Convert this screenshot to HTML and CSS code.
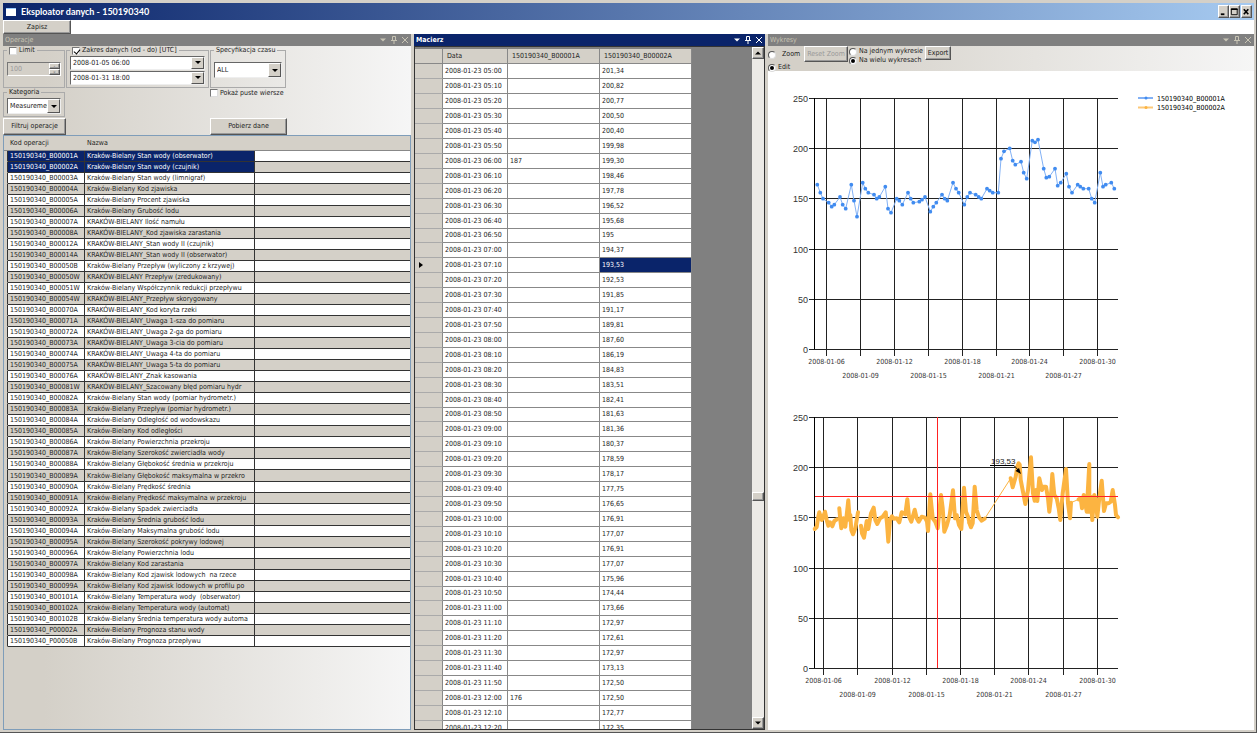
FILE: index.html
```html
<!DOCTYPE html>
<html lang="pl">
<head>
<meta charset="utf-8">
<title>Eksploator danych - 150190340</title>
<link rel="stylesheet" href="styles.css">
</head>
<body>
<div class="window">
  <header class="titlebar">
    <span class="app-icon"></span>
    <h1 class="title">Eksploator danych - 150190340</h1>
    <div class="win-buttons">
      <button class="btn win-btn" aria-label="Minimalizuj"><svg viewBox="0 0 10 10"><path d="M2 7.5h4" stroke="#000" stroke-width="2"/></svg></button>
      <button class="btn win-btn" aria-label="Maksymalizuj"><svg viewBox="0 0 10 10"><path d="M1.5 1.5h6.500v6.500h-6.500z" fill="none" stroke="#000"/><path d="M1 2h7.500" stroke="#000" stroke-width="1.500"/></svg></button>
      <button class="btn win-btn win-close" aria-label="Zamknij"><svg viewBox="0 0 10 10"><path d="M2 2l5 5.500M7 2l-5 5.500" stroke="#000" stroke-width="1.800"/></svg></button>
    </div>
  </header>
  <nav class="toolbar"><button class="btn save">Zapisz</button></nav>

  <main class="panes">
    <section class="pane operations">
      <div class="pane-head"><h2>Operacje</h2>
        <svg class="pane-icons" viewBox="0 0 34 12"><path d="M3 4.500h6l-3 3z" fill="currentColor"/><path d="M15.500 2.500h3v4h-3zM14 6.500h6M17 6.500v3.500" fill="none" stroke="currentColor"/><path d="M25 3l6 6M31 3l-6 6" stroke="currentColor"/></svg>
      </div>
      <form class="filters">
        <fieldset class="group">
          <legend><label><input type="checkbox" class="check">Limit</label></legend>
          <div class="spinner"><input type="text" class="num" value="100" disabled aria-label="Limit wierszy"><span class="steps"><button type="button" class="btn" disabled aria-label="Więcej">▴</button><button type="button" class="btn" disabled aria-label="Mniej">▾</button></span></div>
        </fieldset>
        <fieldset class="group range">
          <legend><label><input type="checkbox" class="check" checked>Zakres danych (od - do) [UTC]</label></legend>
          <span class="combo"><select aria-label="Od"><option>2008-01-05 06:00</option></select></span>
          <span class="combo"><select aria-label="Do"><option>2008-01-31 18:00</option></select></span>
        </fieldset>
        <fieldset class="group">
          <legend>Specyfikacja czasu</legend>
          <span class="combo tall spec"><select aria-label="Specyfikacja czasu"><option>ALL</option></select></span>
        </fieldset>
        <fieldset class="group category">
          <legend>Kategoria</legend>
          <span class="combo tall"><select aria-label="Kategoria"><option>Measurements</option></select></span>
        </fieldset>
        <label class="empty-rows"><input type="checkbox" class="check">Pokaż puste wiersze</label>
        <button type="button" class="btn filter-btn">Filtruj operacje</button>
        <button type="button" class="btn fetch-btn">Pobierz dane</button>
      </form>
      <div class="ops-frame">
        <table class="ops">
          <colgroup><col class="c-gap"><col class="c-code"><col class="c-name"><col></colgroup>
          <thead><tr><th></th><th>Kod operacji</th><th>Nazwa</th><th></th></tr></thead>
          <tbody id="ops-body"></tbody>
        </table>
      </div>
    </section>

    <section class="pane matrix">
      <div class="pane-head active"><h2>Macierz</h2>
        <svg class="pane-icons" viewBox="0 0 34 12"><path d="M3 4.500h6l-3 3z" fill="currentColor"/><path d="M15.500 2.500h3v4h-3zM14 6.500h6M17 6.500v3.500" fill="none" stroke="currentColor"/><path d="M25 3l6 6M31 3l-6 6" stroke="currentColor"/></svg>
      </div>
      <div class="matrix-frame">
        <div class="matrix-view">
          <table class="grid">
            <colgroup><col class="g-mark"><col class="g-date"><col class="g-val"><col class="g-val"></colgroup>
            <thead><tr><th></th><th>Data</th><th>150190340_B00001A</th><th>150190340_B00002A</th></tr></thead>
            <tbody id="grid-body"></tbody>
          </table>
        </div>
        <div class="scroll">
          <button class="btn arrow" aria-label="W górę"><svg viewBox="0 0 10 10"><path d="M2 6.500h6l-3-3z"/></svg></button>
          <span class="track-top"></span><span class="btn thumb"></span><span class="track-end"></span>
          <button class="btn arrow" aria-label="W dół"><svg viewBox="0 0 10 10"><path d="M2 3.500h6l-3 3z"/></svg></button>
        </div>
      </div>
    </section>

    <section class="pane charts">
      <div class="pane-head"><h2>Wykresy</h2>
        <svg class="pane-icons" viewBox="0 0 34 12"><path d="M3 4.500h6l-3 3z" fill="currentColor"/><path d="M15.500 2.500h3v4h-3zM14 6.500h6M17 6.500v3.500" fill="none" stroke="currentColor"/><path d="M25 3l6 6M31 3l-6 6" stroke="currentColor"/></svg>
      </div>
      <div class="chart-tools">
        <div class="modes">
          <label class="zoom-mode"><input type="radio" name="mode" class="radio">Zoom</label>
          <label><input type="radio" name="mode" class="radio" checked>Edit</label>
        </div>
        <button class="btn reset" disabled>Reset Zoom</button>
        <div class="layouts">
          <label><input type="radio" name="layout" class="radio">Na jednym wykresie</label>
          <label><input type="radio" name="layout" class="radio" checked>Na wielu wykresach</label>
        </div>
        <button class="btn export">Export</button>
      </div>
      <svg class="plot" id="plot" viewBox="768 71 486 659" preserveAspectRatio="xMinYMin meet" role="img" aria-label="Wykresy stanu wody"></svg>
    </section>
  </main>
</div>
<script src="script.js"></script>
</body>
</html>
```

FILE: styles.css
```css
* { box-sizing: border-box; }

body {
  margin: 0;
  background: #d4d0c8;
  color: #222;
  font: 7px/9px "DejaVu Sans Condensed", "Noto Sans", sans-serif;
}

h1, h2 { margin: 0; font-size: inherit; }

button, input, select { font: inherit; color: inherit; }

.window {
  display: flex;
  flex-direction: column;
  height: 100vh;
  padding: 3px 2px 2px 3px;
  overflow: hidden;
  border-bottom: 1px solid #555;
  border-right: 1px solid #555;
}

.btn {
  padding: 0;
  background: #d4d0c8;
  border: 1px solid;
  border-color: #fff #555 #555 #fff;
  box-shadow: inset -1px -1px #999;
  text-align: center;
}
.btn:disabled { color: #999; }

/* Title bar */
.titlebar {
  display: flex;
  flex: none;
  align-items: center;
  height: 17px;
  padding: 0 2px 0 3px;
  background: linear-gradient(90deg, #0a246a, #a6caf0);
  color: #fff;
}
.app-icon {
  width: 10px;
  height: 8px;
  margin-right: 5px;
  background: #fff;
  border-top: 1px solid #9cf;
}
.title { font: bold 9px/12px Lato, "Open Sans", sans-serif; white-space: nowrap; }
.win-buttons { display: flex; margin-left: auto; }
.win-btn { width: 11px; height: 13px; }
.win-btn svg { display: block; width: 9px; height: 10px; }
.win-close { margin-left: 1px; }

.toolbar { flex: none; height: 14px; background: #fff; }
.save { display: block; width: 68px; height: 14px; }

/* Docked panes */
.panes {
  display: grid;
  grid-template-columns: 408fr 351fr 486fr;
  gap: 3px;
  flex: 1;
  min-height: 0;
}
.pane {
  display: flex;
  flex-direction: column;
  min-width: 0;
  min-height: 0;
}
.pane-head {
  display: flex;
  flex: none;
  align-items: center;
  justify-content: space-between;
  height: 12px;
  padding: 0 0 0 2px;
  background: #808080;
  color: #c8c4b4;
}
.pane-head h2 { font-weight: normal; }
.pane-head.active { background: #0a246a; color: #fff; }
.pane-head.active h2 { font-weight: bold; }
.pane-icons { width: 34px; height: 12px; }

/* Operations */
.operations { background: linear-gradient(90deg, #d4d0c8 10%, #f6f6f6); }
.filters {
  display: grid;
  flex: none;
  grid-template-columns: 63px 144px 77px;
  grid-template-rows: 42px 30px 17px;
}
.group {
  min-width: 0;
  margin: 0 1px 0 0;
  padding: 0 3px;
  border: 1px solid #aaa;
}
.group legend { height: 9px; padding: 0 2px; white-space: nowrap; }
.group label, .empty-rows { display: flex; align-items: center; }
.check {
  appearance: none;
  flex: none;
  width: 8px;
  height: 8px;
  margin: 0 2px 0 0;
  background: #fff;
  border: 1px solid;
  border-color: #777 #ddd #ddd #777;
  color: #000;
}
.check:checked::before {
  content: "";
  display: block;
  width: 3px;
  height: 5px;
  margin-left: 2px;
  border: solid #000;
  border-width: 0 1px 1px 0;
  transform: rotate(40deg);
}
.spinner {
  display: flex;
  height: 14px;
  margin-top: 7px;
  border: 1px solid;
  border-color: #777 #fff #fff #777;
}
.num { flex: 1; width: 0; padding: 0 2px; border: 0; background: #d4d0c8; color: #999; }
.steps { display: grid; width: 11px; }
.steps .btn { font-size: 5px; line-height: 3px; overflow: hidden; }
.combo {
  position: relative;
  display: block;
  height: 14px;
  margin-top: 1px;
  background: #fff;
  border: 1px solid;
  border-color: #666 #eee #eee #666;
}
.combo select {
  display: block;
  width: 100%;
  height: 100%;
  padding: 0 12px 0 2px;
  appearance: none;
  background: none;
  border: 0;
}
.combo::before {
  content: "";
  position: absolute;
  top: 0;
  right: 0;
  bottom: 0;
  width: 11px;
  background: #d4d0c8;
  border: 1px solid;
  border-color: #fff #555 #555 #fff;
  pointer-events: none;
}
.combo::after {
  content: "";
  position: absolute;
  top: 4px;
  right: 3px;
  border: 3px solid transparent;
  border-top-color: #000;
  border-bottom: 0;
  pointer-events: none;
}
.combo.tall { height: 16px; }
.combo.tall::after { top: 6px; }
.combo.spec { margin-top: 7px; }
.group.category { margin-bottom: 1px; }
.empty-rows { grid-column: 3; align-self: start; height: 10px; white-space: nowrap; }
.filter-btn { grid-column: 1; }
.fetch-btn { grid-column: 3; }

.ops-frame {
  flex: 1;
  min-height: 0;
  overflow: hidden;
  border: 1px solid #7f9db9;
}
.ops { width: 100%; table-layout: fixed; border-collapse: separate; border-spacing: 0; }
.c-gap { width: 4px; }
.c-code { width: 77px; }
.c-name { width: 170px; }
.ops th {
  height: 15px;
  padding: 0 2px;
  background: #d4d0c8;
  border-bottom: 1px solid #888;
  font-weight: normal;
  text-align: left;
}
.ops td {
  height: 11px;
  padding: 0 2px;
  overflow: hidden;
  background: #fff;
  border: solid #333;
  border-width: 0 1px 1px 0;
  line-height: 10px;
  white-space: pre;
}
.ops tbody tr:nth-child(30n) td { height: 12px; }
.ops td:first-child { padding: 0; background: #d4d0c8; border-bottom-color: #d4d0c8; }
.ops td:last-child { border-right: 0; }
.ops tr:nth-child(even) td { background: #d4d0c8; }
.ops tr.selected td:nth-child(2), .ops tr.selected td:nth-child(3) { background: #0a246a; color: #fff; }

/* Matrix */
.matrix-frame {
  display: flex;
  flex: 1;
  min-height: 0;
  border: 1px solid #333;
  background: #808080;
}
.matrix-view { flex: 1; min-width: 0; overflow: hidden; }
.grid { width: 276px; margin-top: 2px; table-layout: fixed; border-collapse: separate; border-spacing: 0; }
.g-mark { width: 28px; }
.g-date { width: 65px; }
.g-val { width: 92px; }
.grid th {
  height: 15px;
  padding: 0 4px;
  background: #d4d0c8;
  border: solid #888;
  border-width: 0 1px 1px 0;
  font-weight: normal;
  text-align: left;
}
.grid td {
  height: 15px;
  padding: 0 2px;
  background: #fff;
  border: solid #888;
  border-width: 0 1px 1px 0;
  line-height: 13px;
  white-space: nowrap;
}
.grid tbody tr:nth-child(12n) td { height: 14px; }
.grid td:first-child { padding: 0 4px; background: #d4d0c8; border-bottom-color: #aaa; }
.grid td.current { background: #0a246a; color: #fff; }
.marker { display: block; width: 5px; height: 6px; }
.scroll { display: flex; flex-direction: column; flex: none; width: 12px; background: #eceae6; }
.arrow { width: 12px; height: 12px; }
.arrow svg { display: block; width: 10px; height: 10px; }
.track-top { flex: 434; }
.thumb { height: 9px; }
.track-end { flex: 216; }

/* Charts */
.charts { background: #fff; }
.chart-tools {
  display: flex;
  flex: none;
  align-items: flex-start;
  height: 25px;
  background: linear-gradient(90deg, #d4d0c8 10%, #f6f6f6);
}
.chart-tools label { display: flex; align-items: center; white-space: nowrap; }
.modes { display: grid; width: 36px; gap: 4px; padding-top: 4px; }
.modes .zoom-mode .radio { margin-right: 6px; }
.radio {
  appearance: none;
  display: grid;
  place-items: center;
  flex: none;
  width: 8px;
  height: 8px;
  margin: 0 2px 0 0;
  background: #fff;
  border: 1px solid;
  border-color: #555 #ddd #ddd #555;
  border-radius: 50%;
}
.radio:checked::before { content: ""; width: 4px; height: 4px; background: #000; border-radius: 50%; }
.reset { width: 44px; height: 16px; white-space: nowrap; }
.layouts { width: 77px; padding: 1px 0 0 1px; }
.export { width: 26px; height: 14px; }
.plot { display: block; flex: 1; width: 100%; min-height: 0; }
.plot .line { stroke: #000; stroke-width: 1; fill: none; }
.plot .grid-line { stroke: #222; stroke-width: 1; }
.plot .y-label { font: 9px "Liberation Sans", sans-serif; text-anchor: end; fill: #333; }
.plot .x-label { text-anchor: middle; fill: #333; }
.plot .blue { fill: none; stroke: #82b1f5; stroke-width: 1; }
.plot .dot { fill: #418cf0; }
.plot .orange { fill: none; stroke: #fcb441; stroke-width: 4; stroke-linejoin: round; stroke-linecap: round; }
.plot .orange-thin { fill: none; stroke: #fcb441; stroke-width: 1; }
.plot .cursor { stroke: #f22; stroke-width: 1; }
.plot .note { font: 8px "Liberation Sans", sans-serif; fill: #222; }
```

FILE: script.js
```js
const operations = `B00001A|Kraków-Bielany Stan wody (obserwator)
B00002A|Kraków-Bielany Stan wody (czujnik)
B00003A|Kraków-Bielany Stan wody (limnigraf)
B00004A|Kraków-Bielany Kod zjawiska
B00005A|Kraków-Bielany Procent zjawiska
B00006A|Kraków-Bielany Grubość lodu
B00007A|KRAKÓW-BIELANY Ilość namułu
B00008A|KRAKÓW-BIELANY_Kod zjawiska zarastania
B00012A|KRAKÓW-BIELANY_Stan wody II (czujnik)
B00014A|KRAKÓW-BIELANY_Stan wody II (obserwator)
B00050B|Kraków-Bielany Przepływ (wyliczony z krzywej)
B00050W|KRAKÓW-BIELANY Przepływ (zredukowany)
B00051W|Kraków-Bielany Współczynnik redukcji przepływu
B00054W|KRAKÓW-BIELANY_Przepływ skorygowany
B00070A|KRAKÓW-BIELANY_Kod koryta rzeki
B00071A|KRAKÓW-BIELANY_Uwaga 1-sza do pomiaru
B00072A|KRAKÓW-BIELANY_Uwaga 2-ga do pomiaru
B00073A|KRAKÓW-BIELANY_Uwaga 3-cia do pomiaru
B00074A|KRAKÓW-BIELANY_Uwaga 4-ta do pomiaru
B00075A|KRAKÓW-BIELANY_Uwaga 5-ta do pomiaru
B00076A|KRAKÓW-BIELANY_Znak kasowania
B00081W|KRAKÓW-BIELANY_Szacowany błęd pomiaru hydr
B00082A|Kraków-Bielany Stan wody (pomiar hydrometr.)
B00083A|Kraków-Bielany Przepływ (pomiar hydrometr.)
B00084A|Kraków-Bielany Odległość od wodowskazu
B00085A|Kraków-Bielany Kod odległości
B00086A|Kraków-Bielany Powierzchnia przekroju
B00087A|Kraków-Bielany Szerokość zwierciadła wody
B00088A|Kraków-Bielany Głębokość średnia w przekroju
B00089A|Kraków-Bielany Głębokość maksymalna w przekro
B00090A|Kraków-Bielany Prędkość średnia
B00091A|Kraków-Bielany Prędkość maksymalna w przekroju
B00092A|Kraków-Bielany Spadek zwierciadła
B00093A|Kraków-Bielany Średnia grubość lodu
B00094A|Kraków-Bielany Maksymalna grubość lodu
B00095A|Kraków-Bielany Szerokość pokrywy lodowej
B00096A|Kraków-Bielany Powierzchnia lodu
B00097A|Kraków-Bielany Kod zarastania
B00098A|Kraków-Bielany Kod zjawisk lodowych  na rzece
B00099A|Kraków-Bielany Kod zjawisk lodowych w profilu po
B00101A|Kraków-Bielany Temperatura wody  (obserwator)
B00102A|Kraków-Bielany Temperatura wody (automat)
B00102B|Kraków-Bielany Średnia temperatura wody automa
P00002A|Kraków-Bielany Prognoza stanu wody
P00050B|Kraków-Bielany Prognoza przepływu`.split("\n");

document.getElementById("ops-body").innerHTML = operations.map((row, i) => {
  const [code, name] = row.split("|");
  return `<tr${i < 2 ? ' class="selected"' : ""}><td></td><td>150190340_${code}</td><td>${name}</td><td></td></tr>`;
}).join("");

const levels = ("201,34 200,82 200,77 200,50 200,40 199,98 199,30 198,46 197,78 196,52 195,68 195 194,37 193,53 192,53 " +
  "191,85 191,17 189,81 187,60 186,19 184,83 183,51 182,41 181,63 181,36 180,37 178,59 178,17 177,75 176,65 " +
  "176,91 177,07 176,91 177,07 175,96 174,44 173,66 172,97 172,61 172,97 173,13 172,50 172,50 172,77 172,35").split(" ");
const observed = { 6: "187", 42: "176" };
const currentRow = 13;

document.getElementById("grid-body").innerHTML = levels.map((value, i) => {
  const hour = String(5 + Math.floor(i / 6)).padStart(2, "0");
  const mark = i === currentRow ? '<svg class="marker" viewBox="0 0 5 6"><path d="M0 0l4 3-4 3z"/></svg>' : "";
  return `<tr><td>${mark}</td><td>2008-01-23 ${hour}:${i % 6}0</td><td>${observed[i] || ""}</td><td${i === currentRow ? ' class="current"' : ""}>${value}</td></tr>`;
}).join("");

/* Series are stored in thirds of a unit, relative to an origin. */
const place = (text, ox, oy) => text.split(" ").map(pair => {
  const [x, y] = pair.split(",").map(Number);
  return [ox + x / 3, oy + y / 3];
});
const polyline = (points, cls) => `<polyline class="${cls}" points="${points.map(p => p.map(n => n.toFixed(1)).join()).join(" ")}"/>`;

function axes(top, gridX) {
  const bottom = top + 251;
  let out = "";
  for (let i = 0; i < 6; i++) {
    const y = Math.round(top + i * 50.2) + 0.5;
    out += `<path class="grid-line" d="M809 ${y}H1118"/><text class="y-label" x="808" y="${y + 3}">${250 - i * 50}</text>`;
  }
  gridX.forEach((x, i) => {
    out += `<path class="grid-line" d="M${x} ${top}V${bottom + 7}"/>`;
    out += `<text class="x-label" x="${x}" y="${bottom + (i % 2 ? 29 : 15)}">2008-01-${String(6 + i * 3).padStart(2, "0")}</text>`;
  });
  return out + `<path class="line" d="M814.5 ${top}V${bottom}"/>`;
}

const blue = place("82,284 91,308 99,326 116,338 125,350 133,344 150,321 158,344 167,356 184,284 192,332 201,380 218,278 226,296 235,308 252,314 260,326 268,321 286,290 294,356 303,368 320,326 328,332 337,344 354,308 362,326 370,338 388,335 396,329 405,321 421,365 430,350 439,338 456,314 464,326 472,332 489,278 498,296 506,308 523,344 532,321 540,308 557,314 566,321 574,326 591,296 599,302 608,308 625,308 633,206 642,184 659,175 668,212 676,224 693,215 701,248 710,266 727,152 735,157 744,149 761,236 769,263 778,260 795,236 803,287 812,278 829,251 837,290 846,308 863,284 871,290 880,296 896,296 905,326 914,338 931,248 939,290 947,284 964,278 973,296", 790, 90);

const orangeLeft = [
  "74,372 80,366 85,335 88,322 95,345 99,338 105,320 110,345 115,362 120,352 127,364 133,348 141,343",
  "148,310 151,345 154,370 160,340 166,365 170,330 175,286 179,345 181,330 184,375 189,388 196,370 204,322",
  "213,362 216,385 222,398 230,348 235,372 243,325 251,308 256,345 262,357 270,340 278,335 287,322 291,355 295,410 300,345 306,334 311,341 320,340 328,352 335,322 346,328 352,283 357,335 364,350 374,314 380,340 386,350 395,335 405,338 411,350 414,378 421,268 428,340 436,350 443,370 453,270 458,310 463,380 470,362 479,330 489,256 495,340 500,330 507,360 514,372 522,248 528,320 534,335 539,355"
].map(s => place(s, 790, 405));
const orangeRight = [
  "28,278 33,292 38,280 44,170 50,240 57,262 65,272 74,266",
  "152,145 158,172 167,140 172,110 176,100 179,104 182,150 190,190 196,222 204,180 213,82 219,190 224,212 228,180 232,213 238,145 246,180 250,170 258,170 264,205 268,245 272,210 277,132 283,195 290,205 296,235 301,270 308,190 318,117 324,220 330,265 333,218",
  "356,208 362,205 366,235 371,195 375,215 380,245 388,102 388,245 392,200 397,270 403,195 408,215 412,260 418,205 425,152 432,243 438,220 446,220 452,215 458,180 465,225 468,255 474,262"
].map(s => place(s, 960, 430));

document.getElementById("plot").innerHTML =
  axes(98, [826.5, 860.5, 894.5, 928.5, 962.5, 996.5, 1029.5, 1063.5, 1097.5]) +
  polyline(blue, "blue") +
  blue.map(([x, y]) => `<circle class="dot" cx="${x.toFixed(1)}" cy="${y.toFixed(1)}" r="1.9"/>`).join("") +
  axes(417, [823.5, 857.5, 892.5, 926.5, 960.5, 994.5, 1028.5, 1063.5, 1097.5]) +
  [...orangeLeft, ...orangeRight].map(s => polyline(s, "orange")).join("") +
  polyline(place("74,266 152,145", 960, 430), "orange-thin") +
  polyline(place("333,218 356,208", 960, 430), "orange-thin") +
  '<path class="cursor" d="M815 496.5H1118M937.5 417V668"/>' +
  '<text class="note" x="991" y="464">193,53</text><path class="line" d="M990 465.500H1014L1019 471"/>' +
  '<path d="M1021 474l-5.500-3 3.500-3z"/>' +
  '<path d="M1138 98h15" stroke="#82b1f5" stroke-width="2"/><circle class="dot" cx="1146" cy="98" r="1.500"/>' +
  '<path d="M1138 107.500h15" stroke="#fcc878" stroke-width="2"/><circle cx="1146" cy="107.500" r="1.500" fill="#fcb441"/>' +
  '<text x="1157" y="101">150190340_B00001A</text><text x="1157" y="110">150190340_B00002A</text>';
```
